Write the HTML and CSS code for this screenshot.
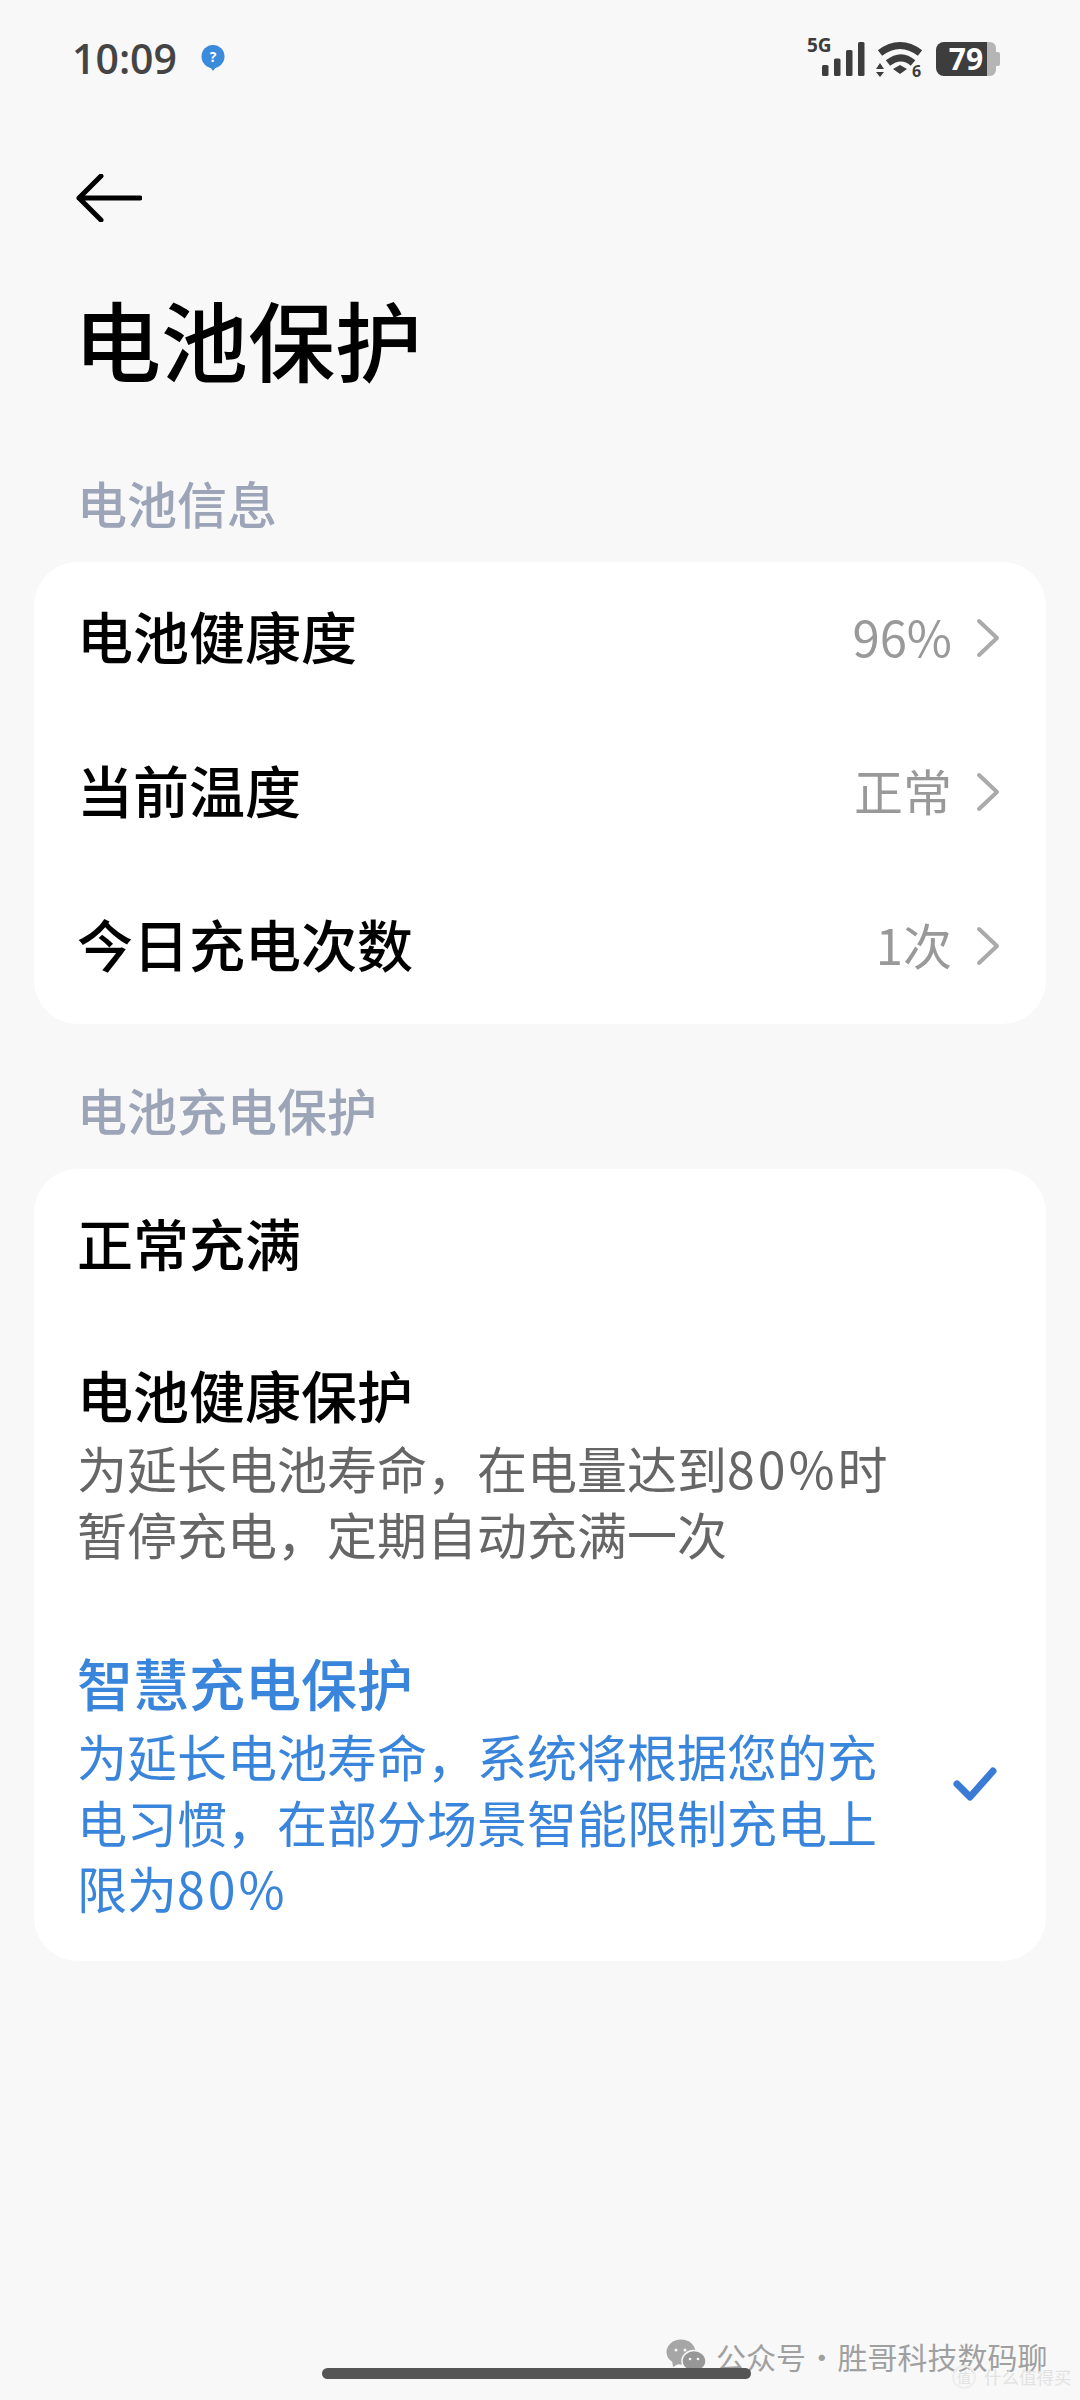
FILE: index.html
```html
<!DOCTYPE html>
<html lang="zh-CN">

<head>
    <meta charset="UTF-8">
    <meta name="viewport" content="width=device-width, initial-scale=1.0">
    <title>电池保护</title>
    <link rel="stylesheet" href="styles.css">
</head>

<body>
    <div class="page">
        <div class="statusbar">
            <div class="status-left">
                <span class="time">10:09</span>
                <svg class="bubble" viewBox="0 0 24 26" width="24" height="26">
                    <circle cx="12" cy="11.5" r="11.5" fill="#3b8bdc" />
                    <path d="M9 22h6l-3 4z" fill="#3b8bdc" />
                    <text x="12" y="16.5" class="bubble-text">?</text>
                </svg>
            </div>
            <svg class="status-icons" viewBox="0 -8 200 60" width="200" height="60">
                <text x="0" y="16" class="net-text">5G</text>
                <rect x="15" y="29" width="6.5" height="11" rx="1.5" />
                <rect x="27" y="22.5" width="6.5" height="17.5" rx="1.5" />
                <rect x="39" y="14" width="6.5" height="26" rx="1.5" />
                <rect x="51" y="6" width="6.5" height="34" rx="1.5" />
                <path d="M73 17 C86 7 100 7 113 17" class="wifi-arc" />
                <path d="M81 27 C90 20 98 20 106 27" class="wifi-arc" />
                <path d="M86 33 L93 29 L100 33 L93 38z" />
                <path d="M69 33l4-6 4 6zM69 36l8 0-4 5z" />
                <text x="105" y="41" class="wifi-six">6</text>
                <path d="M137 6h43v34h-43a8 8 0 0 1-8-8v-18a8 8 0 0 1 8-8z" />
                <path d="M180 6h3a6 6 0 0 1 6 6v4h2a2 2 0 0 1 2 2v10a2 2 0 0 1-2 2h-2v4a6 6 0 0 1-6 6h-3z" fill="#b5b5b5" />
                <text x="159" y="34" class="batt-text">79</text>
            </svg>
        </div>

        <div class="header">
            <svg class="back" viewBox="0 0 66 48" width="66" height="48">
                <path d="M25 2 L3 24 L25 46 M3 24 H64" />
            </svg>
            <h1>电池保护</h1>
        </div>

        <div class="section-label first">电池信息</div>
        <div class="card">
            <div class="row">
                <span class="row-title">电池健康度</span>
                <span class="row-value">96%</span>
                <svg class="chev" viewBox="0 0 24 40" width="24" height="40"><path d="M3 3 L21 20 L3 37" /></svg>
            </div>
            <div class="row">
                <span class="row-title">当前温度</span>
                <span class="row-value">正常</span>
                <svg class="chev" viewBox="0 0 24 40" width="24" height="40"><path d="M3 3 L21 20 L3 37" /></svg>
            </div>
            <div class="row">
                <span class="row-title">今日充电次数</span>
                <span class="row-value">1次</span>
                <svg class="chev" viewBox="0 0 24 40" width="24" height="40"><path d="M3 3 L21 20 L3 37" /></svg>
            </div>
        </div>

        <div class="section-label">电池充电保护</div>
        <div class="card">
            <div class="row">
                <span class="row-title">正常充满</span>
            </div>
            <div class="option">
                <div class="row-title">电池健康保护</div>
                <div class="option-sub">为延长电池寿命，在电量达到<span class="num">80%</span>时<br>暂停充电，定期自动充满一次</div>
            </div>
            <div class="option selected">
                <div class="option-text">
                    <div class="row-title">智慧充电保护</div>
                    <div class="option-sub">为延长电池寿命，系统将根据您的充<br>电习惯，在部分场景智能限制充电上<br>限为<span class="num">80%</span></div>
                </div>
                <svg class="check" viewBox="0 0 44 36" width="44" height="36"><path d="M4 17 L17 30 L40 4" /></svg>
            </div>
        </div>

        <!-- watermarks sit on top of the screenshot -->
        <div class="wm-main">
            <svg class="wm-chat" viewBox="0 0 42 34" width="42" height="34">
                <ellipse cx="15" cy="13" rx="14.5" ry="12.5" fill="#a6a6a6" />
                <path d="M6 21l1 7 7-4z" fill="#a6a6a6" />
                <ellipse cx="28" cy="22" rx="12" ry="10.5" fill="#979797" stroke="#f8f8f8" stroke-width="1.5" />
                <circle cx="10" cy="11" r="1.5" fill="#f8f8f8" />
                <circle cx="19" cy="11" r="1.5" fill="#f8f8f8" />
                <circle cx="24" cy="20" r="1.3" fill="#f8f8f8" />
                <circle cx="32" cy="20" r="1.3" fill="#f8f8f8" />
            </svg>
            <span>公众号 · 胜哥科技数码聊</span>
        </div>
        <div class="homebar"></div>
        <div class="wm-smzdm">
            <span class="wm-circle">值</span>
            <span>什么值得买</span>
        </div>
    </div>
</body></html>
```

FILE: styles.css
```css
* {
    box-sizing: border-box;
}

html,
body {
    margin: 0;
    padding: 0;
}

body {
    background: #f8f8f8;
    font-family: "Noto Sans CJK SC", "Noto Sans", sans-serif;
}

.page {
    position: relative;
    width: 1080px;
    height: 2400px;
    overflow: hidden;
}

.statusbar {
    display: flex;
    justify-content: space-between;
    align-items: center;
    height: 60px;
    margin-top: 28px;
    padding: 0 73px 0 72px;
}

.status-left {
    display: flex;
    align-items: center;
    gap: 24px;
}

.time {
    font-family: "Open Sans", sans-serif;
    font-size: 41px;
    font-weight: 600;
    color: #444;
}

.bubble-text {
    font-family: "Open Sans", sans-serif;
    font-size: 14px;
    font-weight: 700;
    fill: #fff;
    text-anchor: middle;
}

.status-icons {
    fill: #3d3d3d;
}

.net-text {
    font-family: "Open Sans", sans-serif;
    font-size: 19px;
    font-weight: 700;
    fill: #3d3d3d;
}

.wifi-arc {
    fill: none;
    stroke: #3d3d3d;
    stroke-width: 7;
}

.wifi-six {
    font-family: "Open Sans", sans-serif;
    font-size: 16px;
    font-weight: 700;
}

.batt-text {
    font-family: "Open Sans", sans-serif;
    font-size: 30px;
    font-weight: 700;
    fill: #fff;
    text-anchor: middle;
}

.header {
    padding: 86px 0 0 76px;
}

.back {
    display: block;
}

.back path {
    fill: none;
    stroke: #000;
    stroke-width: 5;
    stroke-linecap: round;
    stroke-linejoin: round;
}

h1 {
    margin: 61px 0 0 -2px;
    font-size: 87px;
    line-height: 110px;
    font-weight: 500;
    color: #000;
}

.section-label {
    margin: 57px 0 0 77px;
    font-size: 50px;
    line-height: 56px;
    font-weight: 500;
    color: #9ca4b8;
}

.section-label.first {
    margin-top: 81px;
}

.card {
    margin: 32px 34px 0;
    background: #fff;
    border-radius: 44px;
}

.row {
    display: flex;
    align-items: center;
    height: 154px;
    padding: 0 46px 0 43px;
}

.row-title {
    padding-bottom: 7px;
    font-size: 56px;
    line-height: 72px;
    font-weight: 500;
    color: #000;
}

.row .row-title {
    padding-bottom: 9px;
}

.row-value {
    margin-left: auto;
    padding-bottom: 8px;
    font-size: 49px;
    color: #999;
}

.chev {
    margin: 0 0 2px 24px;
}

.chev path {
    fill: none;
    stroke: #aaa;
    stroke-width: 4;
    stroke-linecap: round;
    stroke-linejoin: round;
}

.option {
    padding: 35px 46px 0 43px;
}

.option-sub {
    margin-top: -3px;
    font-size: 50px;
    line-height: 66px;
    color: #666;
}

.num {
    letter-spacing: 3px;
}

.selected {
    display: flex;
    align-items: center;
    justify-content: space-between;
    padding: 80px 49px 41px 43px;
}

.selected .row-title,
.selected .option-sub {
    color: #3a85dc;
}

.check {
    margin-top: 3px;
}

.check path {
    fill: none;
    stroke: #3a7bd5;
    stroke-width: 7;
    stroke-linecap: round;
    stroke-linejoin: round;
}

.wm-main {
    position: absolute;
    left: 666px;
    top: 2339px;
    display: flex;
    align-items: center;
    gap: 8px;
    font-size: 30px;
    line-height: 34px;
    word-spacing: -6px;
    color: #a0a0a0;
    white-space: pre;
}

.homebar {
    position: absolute;
    left: 322px;
    top: 2368px;
    width: 429px;
    height: 11px;
    border-radius: 6px;
    background: #555;
}

.wm-smzdm {
    position: absolute;
    left: 952px;
    top: 2364px;
    display: flex;
    align-items: center;
    gap: 8px;
    font-size: 17.5px;
    line-height: 26px;
    color: #e2e2e2;
}

.wm-circle {
    display: flex;
    align-items: center;
    justify-content: center;
    width: 24px;
    height: 24px;
    border: 2px solid #eee;
    border-radius: 50%;
    font-size: 14px;
}
```
